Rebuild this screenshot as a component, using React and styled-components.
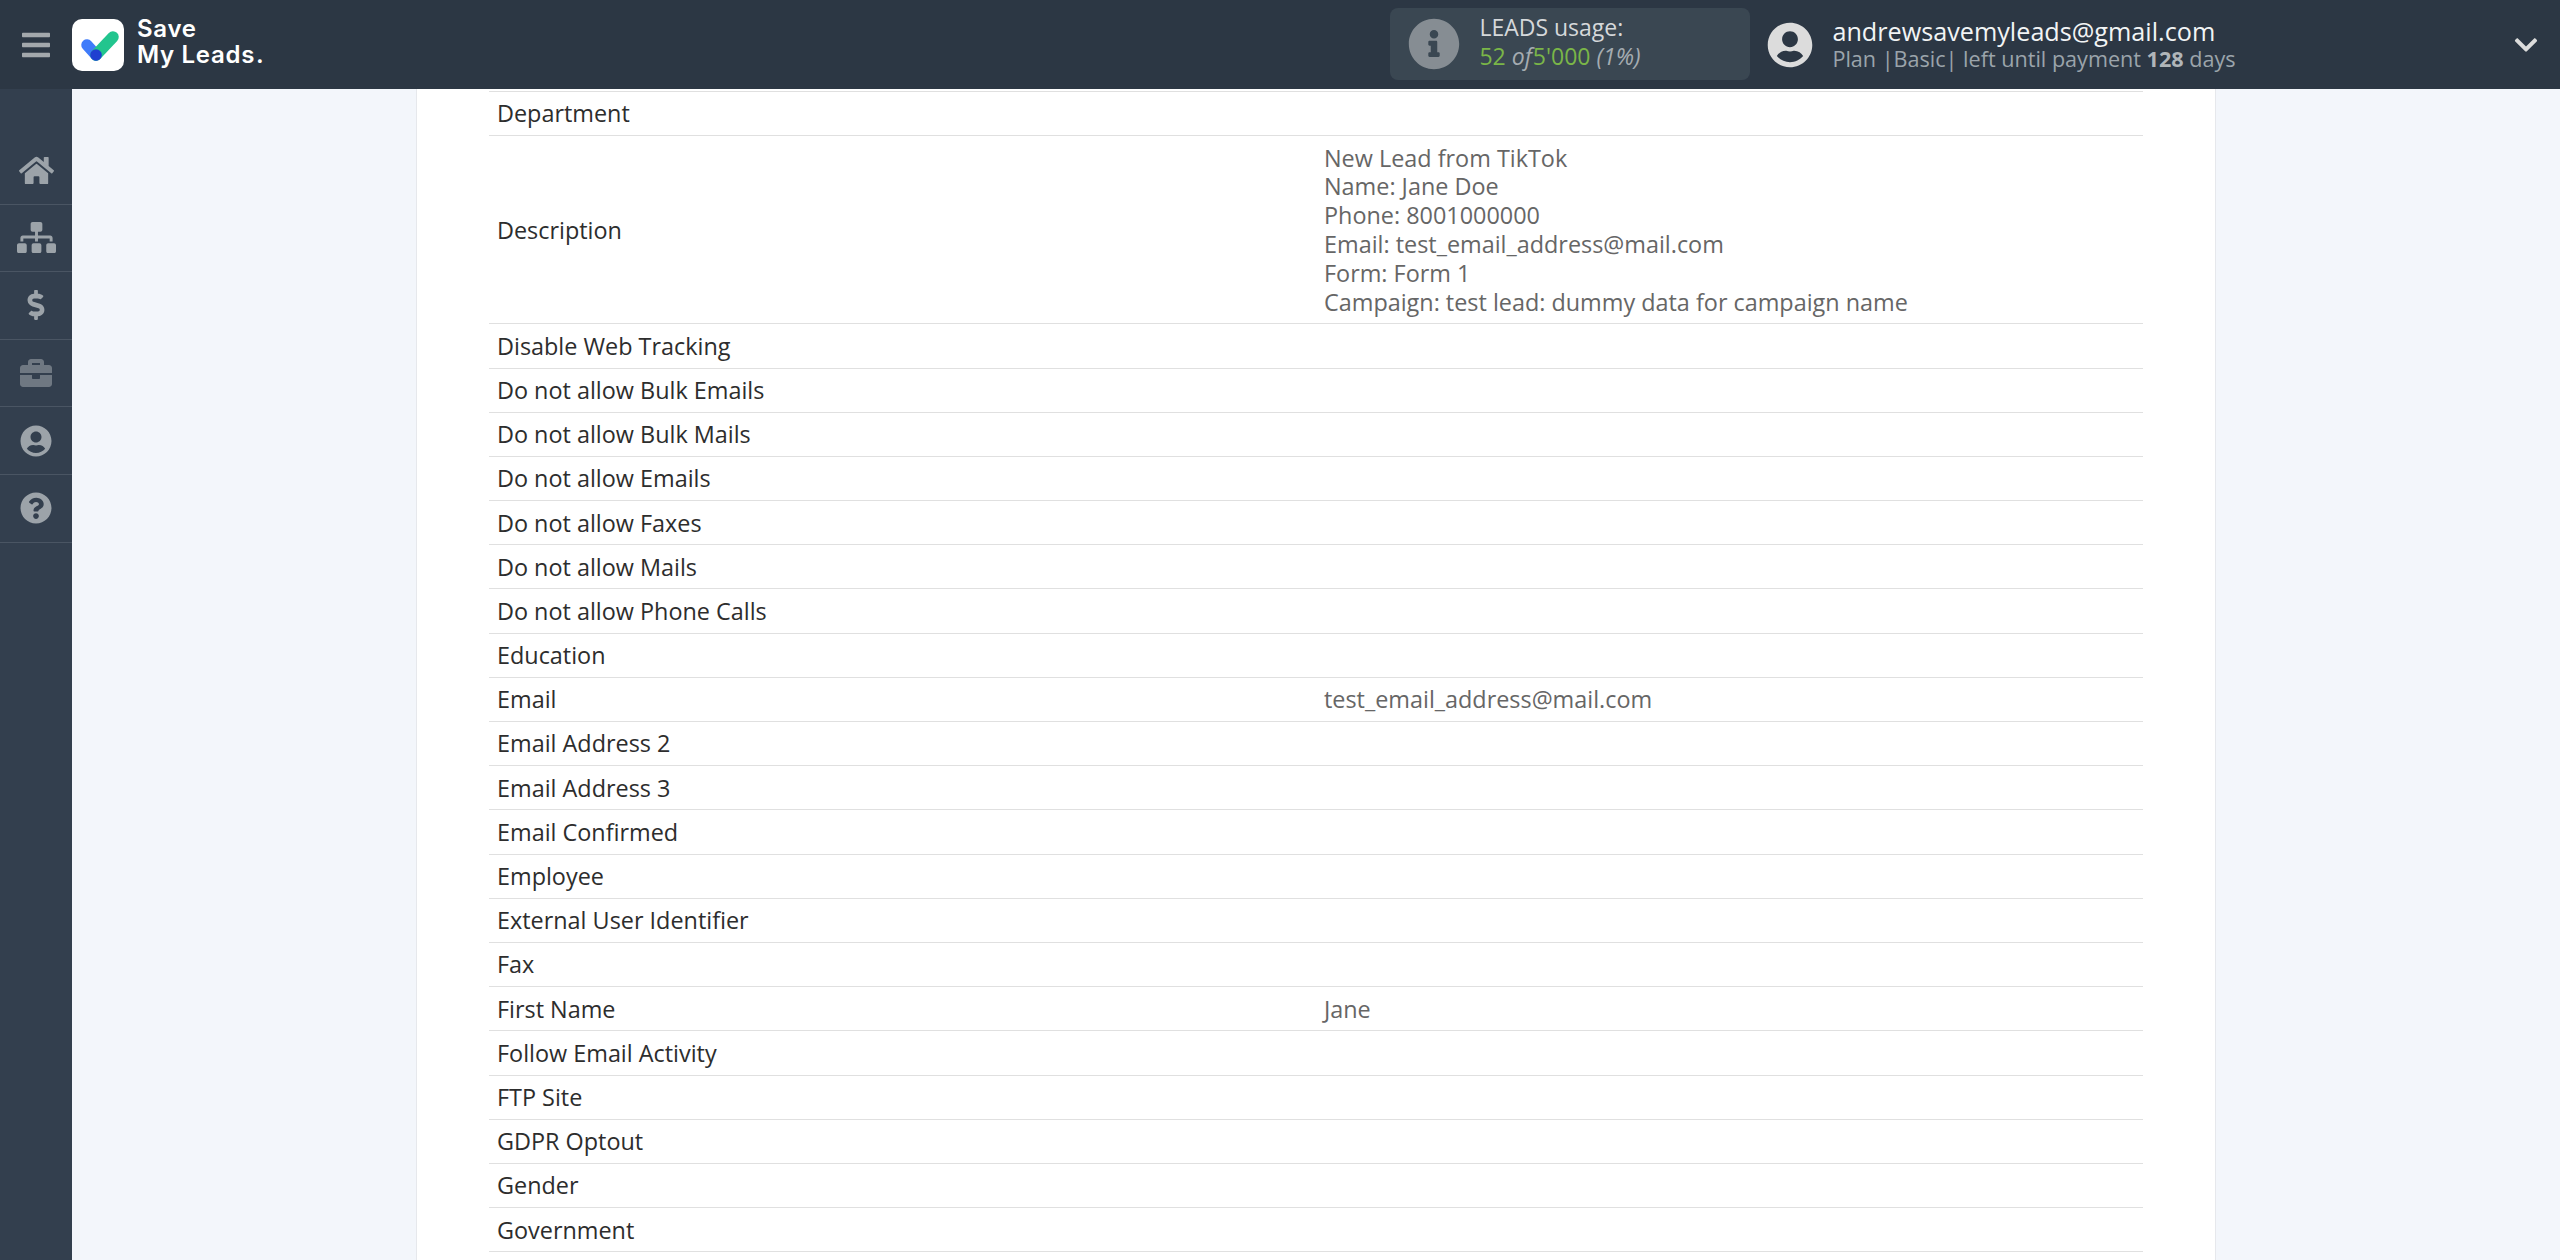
import React from 'react';
import styled, { createGlobalStyle } from 'styled-components';
import {
  FaBars,
  FaBriefcase,
  FaChevronDown,
  FaDollarSign,
  FaHome,
  FaInfoCircle,
  FaQuestionCircle,
  FaSitemap,
  FaUserCircle,
} from 'react-icons/fa';

const GlobalStyle = createGlobalStyle`
  html, body {
    margin: 0;
    height: 100%;
    overflow: hidden;
    background: #f3f6fb;
    font-family: "Open Sans", "Liberation Sans", sans-serif;
  }
`;

const Page = styled.div`
  height: 1260px;
  display: flex;
  flex-direction: column;
  overflow: hidden;
`;

const TopBar = styled.header`
  flex: 0 0 89px;
  display: flex;
  align-items: center;
  background: #2c3744;
  color: #fff;
`;

const MenuButton = styled.div`
  width: 72px;
  display: flex;
  justify-content: center;
  color: #a3a8ac;
  font-size: 32px;
  svg { display: block; }
`;

const LogoBox = styled.div`
  width: 52px;
  height: 52px;
  border-radius: 10px;
  background: #fff;
  svg { display: block; }
`;

const LogoText = styled.div`
  margin-left: 13px;
  padding-bottom: 6px;
  font-family: Inter, "Open Sans", sans-serif;
  font-weight: 600;
  font-size: 24px;
  line-height: 26px;
  letter-spacing: 0.7px;
  white-space: nowrap;
`;

const LogoDot = styled.span`
  margin-left: 1px;
`;

const Usage = styled.div`
  margin-left: 1126px;
  margin-bottom: 1px;
  width: 360px;
  height: 72px;
  box-sizing: border-box;
  padding-left: 18px;
  display: flex;
  align-items: center;
  gap: 19px;
  border-radius: 8px;
  background: #3a4752;
  svg { display: block; color: #868d93; font-size: 52px; }
`;

const UsageText = styled.div`
  padding-bottom: 4px;
  font-size: 23px;
  line-height: 29px;
  color: #d5d8da;
`;

const UsageCount = styled.div`
  color: #7ab648;
`;

const UsageMuted = styled.em`
  margin-right: 1px;
  color: #a5acb1;
`;

const Account = styled.div`
  margin-left: 17px;
  display: flex;
  align-items: center;
  gap: 19px;
  svg { display: block; color: #dcdcdc; font-size: 46px; }
`;

const AccountText = styled.div`
  line-height: 28px;
`;

const Email = styled.div`
  font-size: 25.2px;
  color: #f2f4f5;
`;

const PlanLine = styled.div`
  font-size: 21.6px;
  color: #9ba4ab;
  b { font-weight: 700; color: #b0b5b9; }
`;

const Chevron = styled.div`
  margin-left: auto;
  margin-right: 21px;
  color: #dcdcdc;
  font-size: 26px;
  svg { display: block; }
`;

const Body = styled.div`
  flex: 1;
  min-height: 0;
  display: flex;
`;

const SideBar = styled.nav`
  flex: 0 0 72px;
  padding-top: 48px;
  box-sizing: border-box;
  background: #333f4e;
`;

const SideItem = styled.div`
  height: 67.6px;
  box-sizing: border-box;
  display: flex;
  align-items: center;
  justify-content: center;
  border-bottom: 1px solid #4a5563;
  color: ${p => (p.$dim ? '#6f7882' : '#9ca3a9')};
  font-size: ${p => p.$size || 32}px;
  svg { display: block; }
`;

const Main = styled.main`
  flex: 1;
  min-width: 0;
  padding-left: 344px;
`;

const Card = styled.section`
  width: 1800px;
  height: 100%;
  box-sizing: border-box;
  padding: 2px 72px 0;
  background: #fff;
  border-left: 1px solid #e6e8ec;
  border-right: 1px solid #e6e8ec;
`;

const Table = styled.table`
  width: 1654px;
  table-layout: fixed;
  border-collapse: collapse;
  border-top: 1px solid #e0e0e0;
  font-size: 23.4px;
  line-height: 28.8px;
`;

const Row = styled.tr`
  border-bottom: 1px solid #e0e0e0;
`;

const Label = styled.td`
  width: 50%;
  box-sizing: border-box;
  padding: 7.4px 8px 7px;
  color: #2d2d2d;
`;

const Value = styled.td`
  padding: 7.4px 8px 7px;
  color: #666;
  white-space: pre-line;
`;

const description = `New Lead from TikTok
Name: Jane Doe
Phone: 8001000000
Email: test_email_address@mail.com
Form: Form 1
Campaign: test lead: dummy data for campaign name`;

const rows = [
  ['Department'],
  ['Description', description],
  ['Disable Web Tracking'],
  ['Do not allow Bulk Emails'],
  ['Do not allow Bulk Mails'],
  ['Do not allow Emails'],
  ['Do not allow Faxes'],
  ['Do not allow Mails'],
  ['Do not allow Phone Calls'],
  ['Education'],
  ['Email', 'test_email_address@mail.com'],
  ['Email Address 2'],
  ['Email Address 3'],
  ['Email Confirmed'],
  ['Employee'],
  ['External User Identifier'],
  ['Fax'],
  ['First Name', 'Jane'],
  ['Follow Email Activity'],
  ['FTP Site'],
  ['GDPR Optout'],
  ['Gender'],
  ['Government'],
];

const LogoMark = () => (
  <svg width="52" height="52" viewBox="0 0 52 52">
    <line x1="15" y1="26" x2="24" y2="36" stroke="#3f7bfa" strokeWidth="11.5" strokeLinecap="round" />
    <line x1="24" y1="36" x2="41" y2="18" stroke="#22c58e" strokeWidth="11.5" strokeLinecap="round" />
    <circle cx="24" cy="36" r="5.8" fill="#1f3fd0" />
  </svg>
);

export default function App() {
  return (
    <Page>
      <GlobalStyle />
      <TopBar>
        <MenuButton><FaBars /></MenuButton>
        <LogoBox><LogoMark /></LogoBox>
        <LogoText>Save<br />My Leads<LogoDot>.</LogoDot></LogoText>
        <Usage>
          <FaInfoCircle />
          <UsageText>
            LEADS usage:
            <UsageCount>52 <UsageMuted>of</UsageMuted>5'000 <UsageMuted>(1%)</UsageMuted></UsageCount>
          </UsageText>
        </Usage>
        <Account>
          <FaUserCircle />
          <AccountText>
            <Email>andrewsavemyleads@gmail.com</Email>
            <PlanLine>Plan |Basic| left until payment <b>128</b> days</PlanLine>
          </AccountText>
        </Account>
        <Chevron><FaChevronDown /></Chevron>
      </TopBar>
      <Body>
        <SideBar>
          <SideItem $size={35}><FaHome /></SideItem>
          <SideItem $size={39}><FaSitemap /></SideItem>
          <SideItem $size={30}><FaDollarSign /></SideItem>
          <SideItem $dim><FaBriefcase /></SideItem>
          <SideItem><FaUserCircle /></SideItem>
          <SideItem><FaQuestionCircle /></SideItem>
        </SideBar>
        <Main>
          <Card>
            <Table>
              <tbody>
                {rows.map(([label, value]) => (
                  <Row key={label}>
                    <Label>{label}</Label>
                    <Value>{value}</Value>
                  </Row>
                ))}
              </tbody>
            </Table>
          </Card>
        </Main>
      </Body>
    </Page>
  );
}
